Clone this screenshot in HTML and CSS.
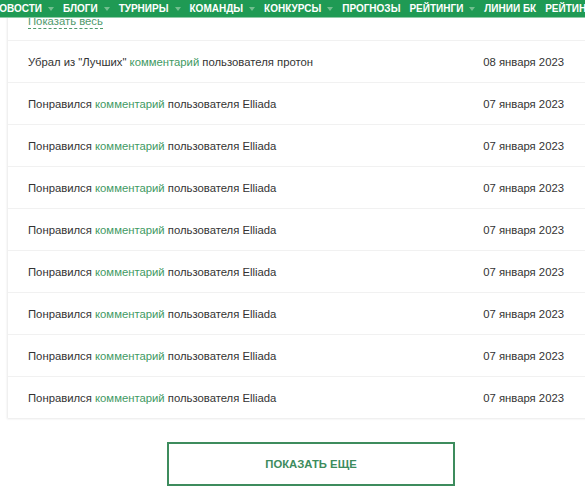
FILE: index.html
```html
<!DOCTYPE html>
<html lang="ru">
<head>
<meta charset="utf-8">
<title>Активность</title>
<link rel="stylesheet" href="styles.css">
</head>
<body>
<header class="topnav">
  <ul class="menu">
    <li class="menu-item has-sub">Новости<span class="caret"></span></li>
    <li class="menu-item has-sub">Блоги<span class="caret"></span></li>
    <li class="menu-item has-sub">Турниры<span class="caret"></span></li>
    <li class="menu-item has-sub">Команды<span class="caret"></span></li>
    <li class="menu-item has-sub">Конкурсы<span class="caret"></span></li>
    <li class="menu-item">Прогнозы</li>
    <li class="menu-item has-sub">Рейтинги<span class="caret"></span></li>
    <li class="menu-item">Линии БК</li>
    <li class="menu-item">Рейтинги букмекеров</li>
  </ul>
</header>
<main class="page">
  <section class="card">
    <div class="card-top"><a class="show-all" href="#">Показать весь</a></div>
    <ul class="feed">
      <li class="feed-row"><span class="feed-text">Убрал из "Лучших" <a href="#">комментарий</a> пользователя протон</span><span class="feed-date">08 января 2023</span></li>
      <li class="feed-row"><span class="feed-text">Понравился <a href="#">комментарий</a> пользователя Elliada</span><span class="feed-date">07 января 2023</span></li>
      <li class="feed-row"><span class="feed-text">Понравился <a href="#">комментарий</a> пользователя Elliada</span><span class="feed-date">07 января 2023</span></li>
      <li class="feed-row"><span class="feed-text">Понравился <a href="#">комментарий</a> пользователя Elliada</span><span class="feed-date">07 января 2023</span></li>
      <li class="feed-row"><span class="feed-text">Понравился <a href="#">комментарий</a> пользователя Elliada</span><span class="feed-date">07 января 2023</span></li>
      <li class="feed-row"><span class="feed-text">Понравился <a href="#">комментарий</a> пользователя Elliada</span><span class="feed-date">07 января 2023</span></li>
      <li class="feed-row"><span class="feed-text">Понравился <a href="#">комментарий</a> пользователя Elliada</span><span class="feed-date">07 января 2023</span></li>
      <li class="feed-row"><span class="feed-text">Понравился <a href="#">комментарий</a> пользователя Elliada</span><span class="feed-date">07 января 2023</span></li>
      <li class="feed-row"><span class="feed-text">Понравился <a href="#">комментарий</a> пользователя Elliada</span><span class="feed-date">07 января 2023</span></li>
    </ul>
  </section>
  <div class="more-wrap"><button class="more-btn" type="button">Показать еще</button></div>
</main>
</body>
</html>
```
FILE: styles.css
```css
* { box-sizing: border-box; }
html, body { margin: 0; padding: 0; background: #fff; }
body {
  font-family: "Liberation Sans", Arial, sans-serif;
  font-size: 11.3px;
  color: #333;
  overflow: hidden;
}
.topnav {
  position: fixed;
  top: 0;
  left: 0;
  right: 0;
  height: 18px;
  background: #1f9a54;
  border-bottom: 1px solid #8fcaa7;
  z-index: 10;
  overflow: hidden;
}
.menu {
  list-style: none;
  margin: 0 0 0 -8px;
  padding: 0;
  display: flex;
  gap: 9px;
  white-space: nowrap;
}
.menu-item {
  display: flex;
  align-items: center;
  height: 17px;
  color: #fff;
  font-weight: bold;
  font-size: 10px;
  text-transform: uppercase;
}
.caret {
  width: 0;
  height: 0;
  margin-left: 6px;
  border-left: 3px solid transparent;
  border-right: 3px solid transparent;
  border-top: 4px solid #72bf8f;
}
.page { padding: 0 0 0 8px; }
.card {
  background: #fff;
  box-shadow: 0 0 2px 1px rgba(0, 0, 0, 0.09);
  margin-right: -10px;
}
.card-top { padding: 15px 20px 11px; line-height: 13px; }
.show-all {
  display: inline-block;
  color: #4f9a6c;
  text-decoration: none;
  border-bottom: 1px dashed #4f9a6c;
}
.feed { list-style: none; margin: 0; padding: 0; }
.feed-row {
  display: flex;
  justify-content: space-between;
  align-items: center;
  height: 42px;
  padding: 0 31px 0 20px;
  border-top: 1px solid #f1f1f1;
}
.feed-text a { color: #3f9a63; text-decoration: none; }
.feed-date { color: #333; }
.more-wrap { padding: 24px 0 0 159px; }
.more-btn {
  width: 288px;
  height: 44px;
  background: #fff;
  border: 2px solid #3d8c5d;
  color: #3d8c5d;
  font-family: "Liberation Sans", Arial, sans-serif;
  font-weight: bold;
  font-size: 11.3px;
  text-transform: uppercase;
  cursor: pointer;
}
```
